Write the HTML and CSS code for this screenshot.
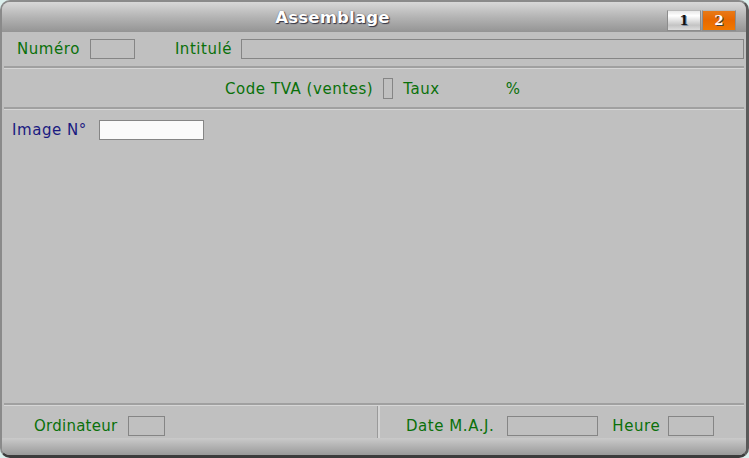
FILE: index.html
```html
<!DOCTYPE html>
<html lang="fr">
<head>
    <meta charset="UTF-8">
    <title>Assemblage</title>
    <link rel="stylesheet" href="styles.css">
</head>
<body>

<div class="window">
    <div class="titlebar">
        <div class="title">Assemblage</div>
        <div class="tabs">
            <span class="tab">1</span>
            <span class="tab active">2</span>
        </div>
    </div>

    <div class="row row-head">
        <span class="lbl">Numéro</span>
        <span class="field f-numero"></span>
        <span class="lbl l-intitule">Intitulé</span>
        <span class="field f-intitule"></span>
    </div>
    <div class="sep"></div>

    <div class="row row-tva">
        <span class="lbl">Code TVA (ventes)</span>
        <span class="field f-tva"></span>
        <span class="lbl l-taux">Taux</span>
        <span class="lbl l-pct">%</span>
    </div>
    <div class="sep"></div>

    <div class="row row-image">
        <span class="lbl blue">Image N°</span>
        <span class="field white f-image"></span>
    </div>

    <div class="spacer"></div>

    <div class="sep"></div>
    <div class="footer">
        <div class="foot-left">
            <span class="lbl">Ordinateur</span>
            <span class="field f-ordi"></span>
        </div>
        <div class="vsep"></div>
        <div class="foot-right">
            <span class="lbl">Date M.A.J.</span>
            <span class="field f-date"></span>
            <span class="lbl l-heure">Heure</span>
            <span class="field f-heure"></span>
        </div>
    </div>
    <div class="bottombar"></div>
</div>

</body>
</html>
```

FILE: styles.css
```css
body {
    margin: 0;
    padding: 0;
    background-color: #dcefed;
    font-family: "DejaVu Sans", Verdana, sans-serif;
    font-size: 15px;
}
.window {
    width: 749px;
    height: 458px;
    box-sizing: border-box;
    background: #c0c0c0;
    border: 2px solid #8a8a8a;
    border-right: 3px solid #5a5a5a;
    border-bottom: 3px solid #3c3c3c;
    border-radius: 10px;
    overflow: hidden;
    display: flex;
    flex-direction: column;
}
.titlebar {
    height: 30px;
    flex-shrink: 0;
    display: flex;
    align-items: center;
    background: linear-gradient(#d8d8d8, #b4b4b4 50%, #949494);
}
.title {
    flex: 1;
    text-align: center;
    color: white;
    font-weight: bold;
    font-size: 16.5px;
    letter-spacing: 0.2px;
    text-shadow: 1px 1px 1px #303040, 0 0 1px #505060;
    padding-top: 1px;
    padding-right: 4px;
}
.tabs {
    display: flex;
    gap: 1px;
    margin-right: 10px;
    margin-top: 6px;
}
.tab {
    width: 34px;
    height: 21px;
    box-sizing: border-box;
    border: 1px solid #8c8c8c;
    border-top-color: #b8b8b8;
    display: flex;
    align-items: center;
    justify-content: center;
    font-family: "DejaVu Serif", serif;
    font-weight: bold;
    font-size: 13px;
    color: #111;
    background: linear-gradient(#e8e8e8, #ffffff 25%, #c4c4c4 75%, #dcdcdc);
    text-shadow: 1px 1px 0 #7a8aa0;
}
.tab.active {
    color: white;
    background: linear-gradient(#e87a18, #e86800 45%, #f07800);
    text-shadow: 1px 1px 0 #404040;
}
.row {
    display: flex;
    align-items: center;
    flex-shrink: 0;
}
.lbl {
    color: #0a700a;
    white-space: nowrap;
    letter-spacing: 0.55px;
}
.lbl.blue {
    color: #1a1a80;
}
.field {
    display: block;
    box-sizing: border-box;
    height: 20px;
    border: 1px solid #858585;
}
.field.white {
    background: #fafafa;
}
.sep {
    height: 0;
    margin: 0 2px;
    border-top: 2px solid #a0a0a0;
    border-bottom: 1px solid #d6d6d6;
    flex-shrink: 0;
}
.row-head {
    height: 34px;
    padding-left: 15px;
}
.f-numero {
    width: 45px;
    margin-left: 10px;
}
.l-intitule {
    margin-left: 40px;
}
.f-intitule {
    flex: 1;
    margin-left: 9px;
    margin-right: 2px;
}
.row-tva {
    height: 37px;
    padding-top: 1px;
    padding-left: 223px;
}
.f-tva {
    width: 10px;
    height: 21px;
    margin-left: 10px;
}
.l-taux {
    margin-left: 10px;
}
.l-pct {
    margin-left: 66px;
}
.row-image {
    height: 40px;
    padding-left: 10px;
}
.f-image {
    width: 105px;
    margin-left: 12px;
}
.spacer {
    flex: 1;
}
.footer {
    height: 32px;
    display: flex;
    flex-shrink: 0;
}
.foot-left {
    width: 375px;
    display: flex;
    align-items: center;
    padding-left: 32px;
    padding-top: 7px;
    box-sizing: border-box;
}
.foot-left .lbl {
    letter-spacing: 0.25px;
}
.f-ordi {
    width: 37px;
    margin-left: 11px;
}
.vsep {
    width: 0;
    border-left: 1px solid #9a9a9a;
    border-right: 2px solid #d4d4d4;
}
.foot-right {
    flex: 1;
    display: flex;
    align-items: center;
    padding-left: 26px;
    padding-top: 7px;
}
.f-date {
    width: 91px;
    margin-left: 13px;
}
.l-heure {
    margin-left: 14px;
}
.f-heure {
    width: 46px;
    margin-left: 8px;
}
.bottombar {
    height: 17px;
    flex-shrink: 0;
    background: linear-gradient(#cacaca, #b2b2b2 50%, #9a9a9a);
}
```
